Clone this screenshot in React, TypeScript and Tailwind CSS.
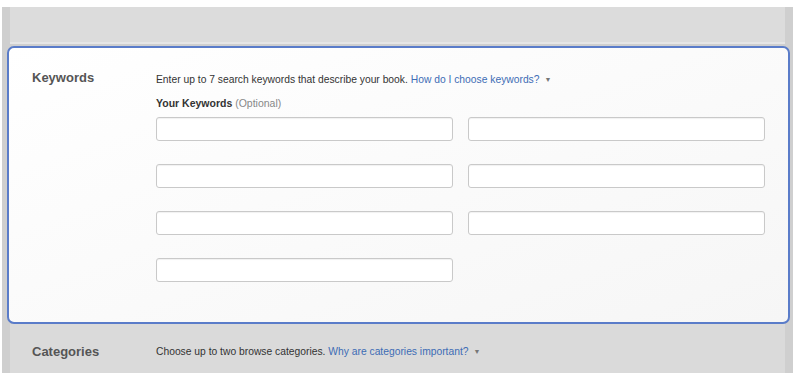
const font = { fontFamily: '"Liberation Sans", Arial, sans-serif' };

function Field() {
  return (
    <input
      type="text"
      className="h-[24px] w-full rounded-[3px] border border-[#c9c9c9] bg-white shadow-[inset_0_1px_1px_rgba(0,0,0,0.06)]"
    />
  );
}

function Caret() {
  return <span className="ml-[5px] inline-block align-middle text-[7px] text-[#777]">▼</span>;
}

export default function App() {
  return (
    <div className="h-[373px] w-[797px] overflow-hidden bg-white pt-[7px]" style={font}>
      <div className="ml-[2px] mr-[4px] h-full bg-[#cfcfcf]">
        <div className="mx-[8px] h-[37px] border-b-2 border-[#e6e6e6] bg-[#dcdcdc]" />
        <div className="ml-[5px] mr-[3px] mt-[2px] flex h-[278px] rounded-[7px] border-2 border-[#5a7cc9] bg-gradient-to-br from-white to-[#f6f6f6] pl-[23px] pt-[20px]">
          <div className="w-[124px] text-[13px] font-bold text-[#555]">Keywords</div>
          <div className="w-[609px]">
            <p className="mt-[4px] text-[10.3px] text-[#333]">
              Enter up to 7 search keywords that describe your book.{' '}
              <span className="text-[#3d6cb5]">How do I choose keywords?</span>
              <Caret />
            </p>
            <p className="mt-[9px] text-[10.5px] font-bold text-[#333]">
              Your Keywords <span className="font-normal text-[#888]">(Optional)</span>
            </p>
            <div className="mt-[5px] grid grid-cols-2 gap-x-[15px] gap-y-[23px]">
              <Field />
              <Field />
              <Field />
              <Field />
              <Field />
              <Field />
              <Field />
            </div>
          </div>
        </div>
        <div className="mx-[8px] flex h-[50px] items-start bg-[#dadada] pl-[22px] pt-[18px]">
          <div className="w-[124px] text-[13px] font-bold text-[#555]">Categories</div>
          <p className="mt-[2px] text-[10.3px] text-[#333]">
            Choose up to two browse categories.{' '}
            <span className="text-[#3d6cb5]">Why are categories important?</span>
            <Caret />
          </p>
        </div>
      </div>
    </div>
  );
}
